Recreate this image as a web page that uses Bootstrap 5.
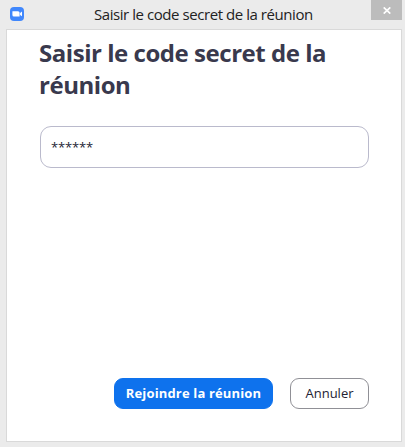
<!DOCTYPE html>
<html lang="fr">
<head>
<meta charset="utf-8">
<meta name="viewport" content="width=device-width, initial-scale=1">
<title>Saisir le code secret de la réunion</title>
<link href="https://cdn.jsdelivr.net/npm/bootstrap@5.3.0/dist/css/bootstrap.min.css" rel="stylesheet">
<style>
body { font-family: "Open Sans", "Noto Sans", sans-serif; background: #ebebeb; color: #232333; }
.win { width: 405px; height: 447px; padding: 0 3px 5px 6px; }
.titlebar { height: 29px; }
.app-icon { width: 16px; height: 16px; margin: 6px 0 0 3px; }
.win-title { font-size: 15px; line-height: 29px; letter-spacing: -.44px; margin-left: 69px; color: #222; }
.win-close { width: 31px; height: 20px; background: #bcbcbc; }
.panel { width: 396px; height: 413px; border: 1px solid #d9d9d9; padding: 7px 32px 32px; }
.heading { font-size: 24px; line-height: 32px; font-weight: 700; letter-spacing: -.46px; color: #39394d; }
.code-input, .code-input:focus { height: 42px; margin: 25px 0 0 1px; width: 329px; border: 1px solid #babacc; border-radius: 11px; padding: 0 10px; font-size: 13px; letter-spacing: -.15px; color: #232333; }
.act { height: 31px; border-radius: 9px; font-size: 13px; padding: 0; line-height: 29px; }
.act-join { width: 159px; margin-right: 17px; background: #0e72ed; border-color: #0e72ed; font-weight: 700; letter-spacing: .15px; }
.act-cancel { width: 79px; border-color: #909096; color: #232333; background: #fff; }
</style>
</head>
<body>
<main class="win d-flex flex-column overflow-hidden">
  <header class="titlebar d-flex align-items-start">
    <svg class="app-icon flex-shrink-0" viewBox="0 0 16 16" aria-hidden="true">
      <rect x="1" y="1" width="14" height="14" rx="4" fill="#4087fc"/>
      <path d="M3.6 5.2H9a1.6 1.6 0 0 1 1.6 1.6v3.8H5A1.6 1.6 0 0 1 3.4 9V5.4zM11.1 7l1.9-1.4v4.7L11.1 9z" fill="#fff"/>
    </svg>
    <div class="win-title text-nowrap"><span>Saisir le code secret de la réunion</span></div>
    <button type="button" class="win-close border-0 p-0 ms-auto d-flex align-items-center justify-content-center" aria-label="Fermer">
      <svg width="8" height="7" viewBox="0 0 8 7"><path d="M.7.4l6.6 6.2M7.3.4L.7 6.6" stroke="#fff" stroke-width="1.7"/></svg>
    </button>
  </header>
  <form class="panel bg-white d-flex flex-column">
    <h1 class="heading m-0"><span class="text-nowrap">Saisir le code secret de la</span><br>réunion</h1>
    <input class="code-input form-control shadow-none" type="text" value="******" aria-label="Code secret">
    <div class="d-flex justify-content-end mt-auto">
      <button type="button" class="btn btn-primary act act-join text-nowrap"><span>Rejoindre la réunion</span></button>
      <button type="button" class="btn act act-cancel"><span>Annuler</span></button>
    </div>
  </form>
</main>
<script src="https://cdn.jsdelivr.net/npm/bootstrap@5.3.0/dist/js/bootstrap.bundle.min.js"></script>
</body>
</html>
